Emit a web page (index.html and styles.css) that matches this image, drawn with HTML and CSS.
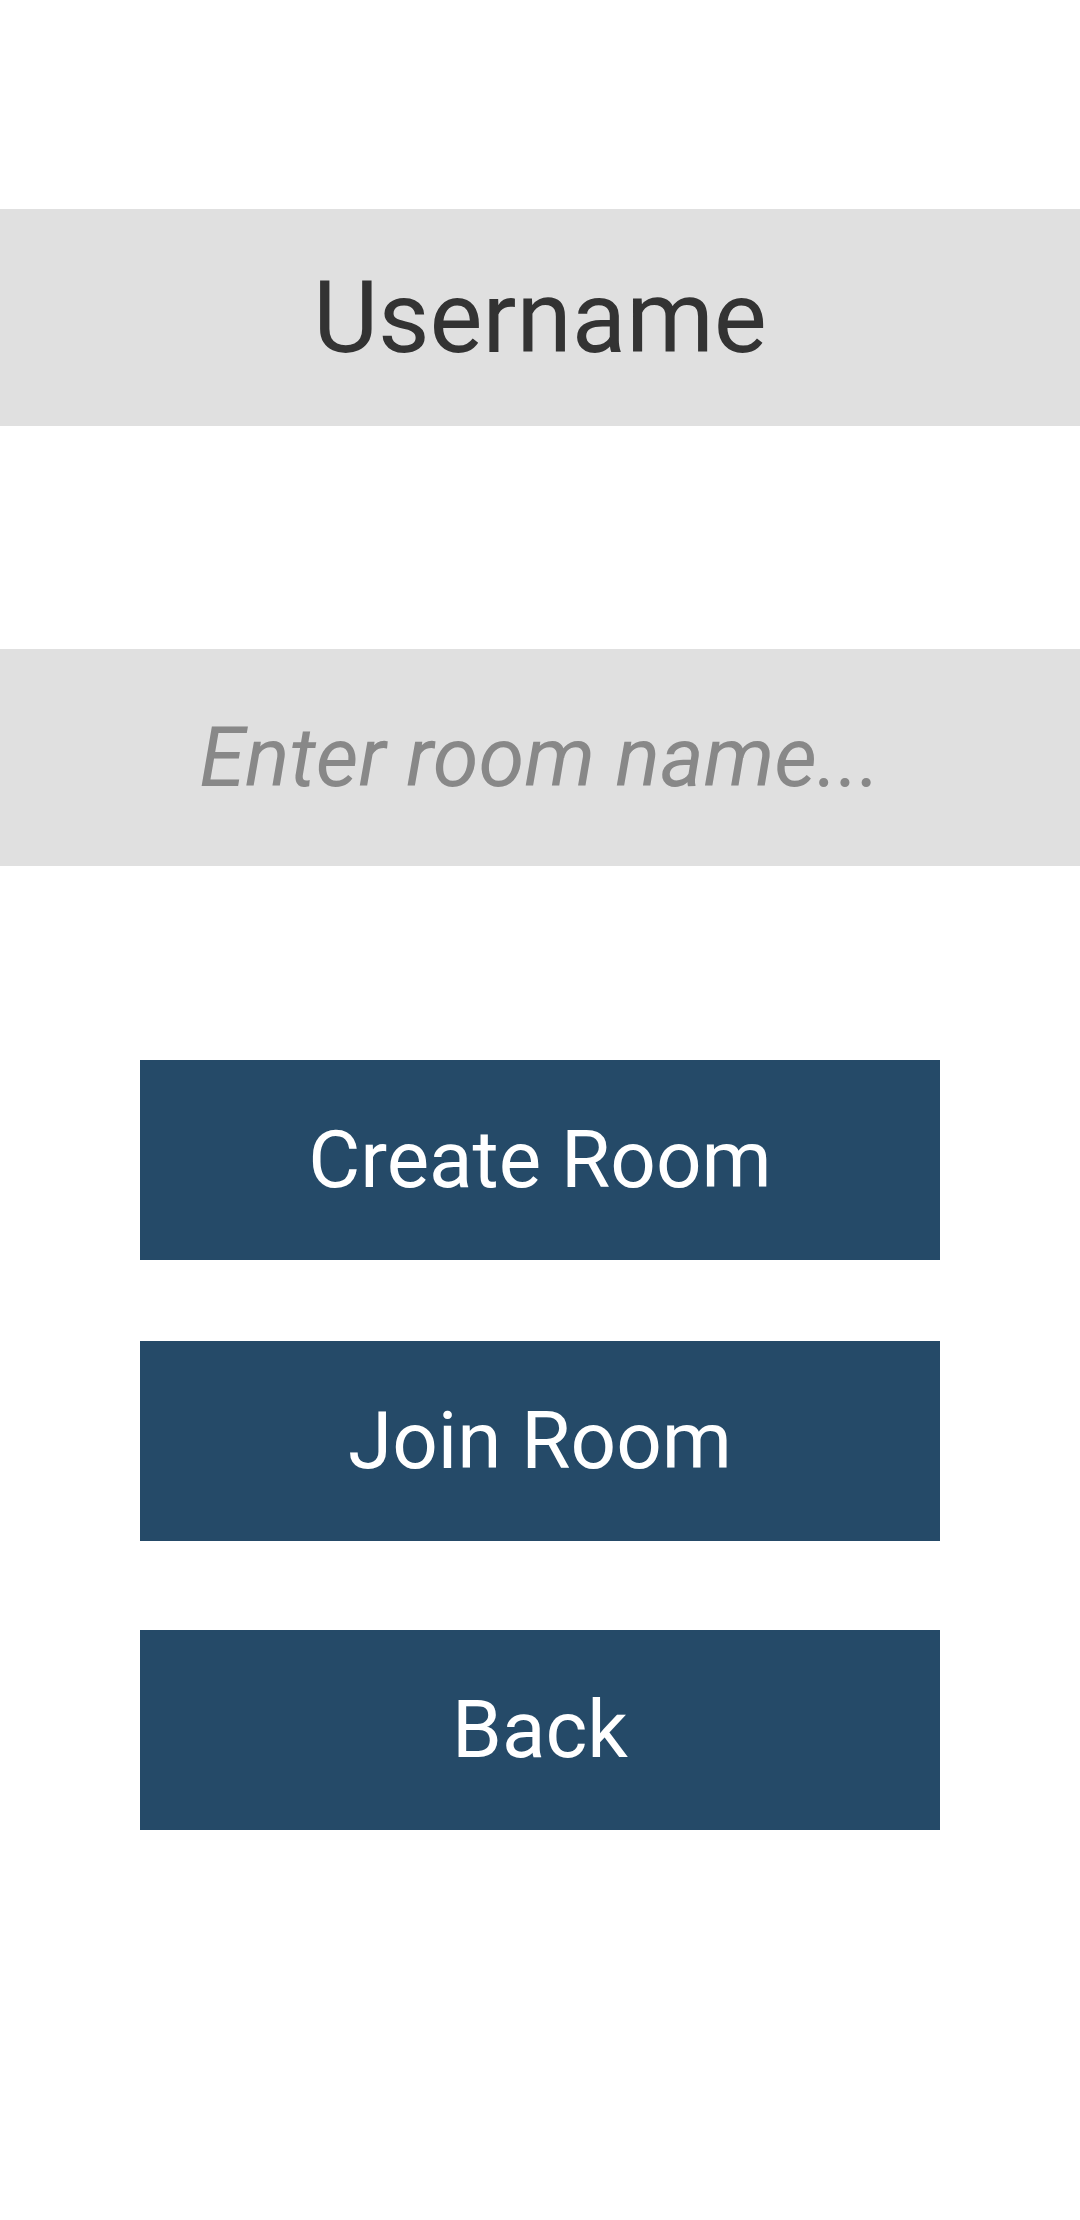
FILE: index.html
```html
<!DOCTYPE html>
<html lang="en">
<head>
    <meta charset="UTF-8">
    <meta name="viewport" content="width=device-width, initial-scale=1.0">
    <title>Rooms</title>
    <link rel="stylesheet" href="styles.css">
</head>
<body>
    <div class="screen">
        <div class="username-bar">Username</div>

        <div class="room-field">
            <input type="text" class="room-input" placeholder="Enter room name...">
        </div>

        <div class="actions">
            <button class="btn btn-create">Create Room</button>
            <button class="btn btn-join">Join Room</button>
            <button class="btn btn-back">Back</button>
        </div>
    </div>
</body>
</html>
```

FILE: styles.css
```css
body {
    font-family: Roboto, 'Noto Sans', Arial, sans-serif;
    margin: 0;
    padding: 0;
    background-color: #fff;
    color: #333;
}
.screen {
    padding-top: 209px;
    min-height: 2220px;
    box-sizing: border-box;
}
.username-bar {
    height: 217px;
    background-color: #e0e0e0;
    display: flex;
    align-items: center;
    justify-content: center;
    font-size: 100px;
    color: #333;
}
.room-field {
    margin-top: 223px;
    height: 217px;
    background-color: #e0e0e0;
}
.room-input {
    width: 100%;
    height: 100%;
    border: none;
    outline: none;
    background: transparent;
    padding: 0;
    text-align: center;
    font-family: inherit;
    font-size: 83px;
    color: #333;
}
.room-input::placeholder {
    color: #888;
    font-style: italic;
}
.actions {
    margin-top: 194px;
    display: flex;
    flex-direction: column;
    align-items: center;
}
.btn {
    width: 800px;
    height: 200px;
    border: none;
    background-color: #254a68;
    color: #fff;
    font-family: inherit;
    font-size: 80px;
    padding: 0;
}
.btn-join {
    margin-top: 81px;
}
.btn-back {
    margin-top: 89px;
}
```
